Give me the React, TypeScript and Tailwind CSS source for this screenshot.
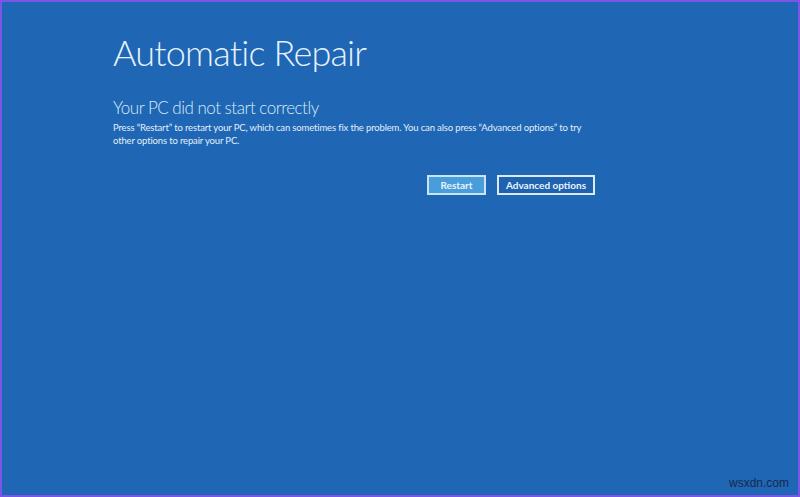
export default function App() {
  return (
    <div
      className="w-[800px] h-[497px] border-2 border-[#7b55e6] bg-[#1f66b5] relative overflow-hidden"
      style={{ fontFamily: 'Lato, "Open Sans", sans-serif' }}
    >
      <div className="pl-[111px] pt-[26px] w-[593px]">
        <h1 className="text-[36px] leading-[48px] font-light text-[#e6f2fb] tracking-[-0.8px]">
          Automatic Repair
        </h1>
        <h2 className="mt-[21px] text-[17px] leading-[22px] font-light text-[#d6ecf7] tracking-[-0.5px]">
          Your PC did not start correctly
        </h2>
        <p className="mt-[3px] text-[9.5px] leading-[12.5px] text-[#e2effa] tracking-[-0.15px]">
          Press “Restart” to restart your PC, which can sometimes fix the problem. You can also press “Advanced options” to try other options to repair your PC.
        </p>
        <div className="mt-[28px] flex justify-end gap-[11px]">
          <button className="w-[59px] h-[20px] border-2 border-[#c9e4f5] bg-[#4a9ddb] text-[10px] font-bold text-[#e8f4fb] leading-none">
            Restart
          </button>
          <button className="w-[98px] h-[20px] border-2 border-[#dbeaf6] bg-[#1f62b0] text-[10px] font-bold text-[#e8f4fb] leading-none">
            Advanced options
          </button>
        </div>
      </div>
      <div
        className="absolute right-[9px] bottom-[3px] text-[12px] text-[#17294a]"
        style={{ fontFamily: '"Liberation Sans", Arial, sans-serif' }}
      >
        wsxdn.com
      </div>
    </div>
  );
}
